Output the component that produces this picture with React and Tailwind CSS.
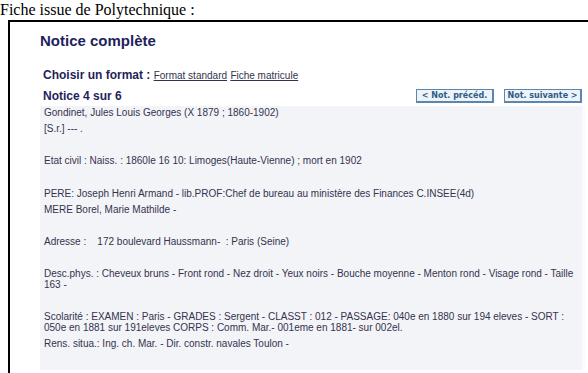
export default function App() {
  const sans = { fontFamily: '"Liberation Sans", Arial, sans-serif' };
  const btn =
    "h-[14px] w-[78px] flex items-center justify-center border border-[#5a86b0] border-r-2 border-b-2 bg-[#eef3f8] text-[8px] font-bold text-[#2d5b88] leading-none";
  return (
    <div className="w-[588px] h-[373px] overflow-hidden bg-white">
      <div className="h-[20px] text-[16px] leading-[19px] text-black" style={{ fontFamily: '"Liberation Serif", "Times New Roman", serif' }}>
        Fiche issue de Polytechnique :
      </div>
      <div className="ml-[8px] h-[360px] border-t-2 border-l-2 border-black pl-[30px] pt-[9px]" style={sans}>
        <div className="text-[15px] font-bold leading-[20px] text-[#1f1f5c]">Notice complète</div>
        <div className="mt-[17px] text-[12px] leading-[14px] text-[#1f1f5c]">
          <span className="font-bold ml-[3px]">Choisir un format : </span>
          <span className="text-[10px] underline text-[#33334f]">Format standard</span>{" "}
          <span className="text-[10px] underline text-[#33334f]">Fiche matricule</span>
        </div>
        <div className="mt-[5px] flex items-center w-[542px] h-[16px]">
          <div className="ml-[3px] text-[12px] font-bold leading-[14px] text-[#1f1f5c]">Notice 4 sur 6</div>
          <div className="ml-auto flex gap-[10px]" style={{ fontFamily: '"DejaVu Sans", Verdana, sans-serif' }}>
            <div className={btn}>&lt; Not. précéd.</div>
            <div className={btn}>Not. suivante &gt;</div>
          </div>
        </div>
        <div className="mt-[2px] w-[545px] h-[264px] bg-[#f3f4f7] border-r-[3px] border-[#fafafb] pl-[4px] pr-[6px] pt-[1px] text-[10px] leading-[11px] text-[#33334f]">
          <div>Gondinet, Jules Louis Georges (X 1879 ; 1860-1902)</div>
          <div className="mt-[5px]">[S.r.] --- .</div>
          <div className="mt-[21px]">Etat civil : Naiss. : 1860le 16 10: Limoges(Haute-Vienne) ; mort en 1902</div>
          <div className="mt-[22px]">PERE: Joseph Henri Armand - lib.PROF:Chef de bureau au ministère des Finances C.INSEE(4d)</div>
          <div className="mt-[5px]">MERE Borel, Marie Mathilde -</div>
          <div className="mt-[21px] whitespace-pre">Adresse :    172 boulevard Haussmann-  : Paris (Seine)</div>
          <div className="mt-[21px]">Desc.phys. : Cheveux bruns - Front rond - Nez droit - Yeux noirs - Bouche moyenne - Menton rond - Visage rond - Taille 163 -</div>
          <div className="mt-[21px] pr-[8px]">Scolarité : EXAMEN : Paris - GRADES : Sergent - CLASST : 012 - PASSAGE: 040e en 1880 sur 194 eleves - SORT : 050e en 1881 sur 191eleves CORPS : Comm. Mar.- 001eme en 1881- sur 002el.</div>
          <div className="mt-[5px]">Rens. situa.:  Ing. ch. Mar. - Dir. constr. navales Toulon -</div>
        </div>
      </div>
    </div>
  );
}
